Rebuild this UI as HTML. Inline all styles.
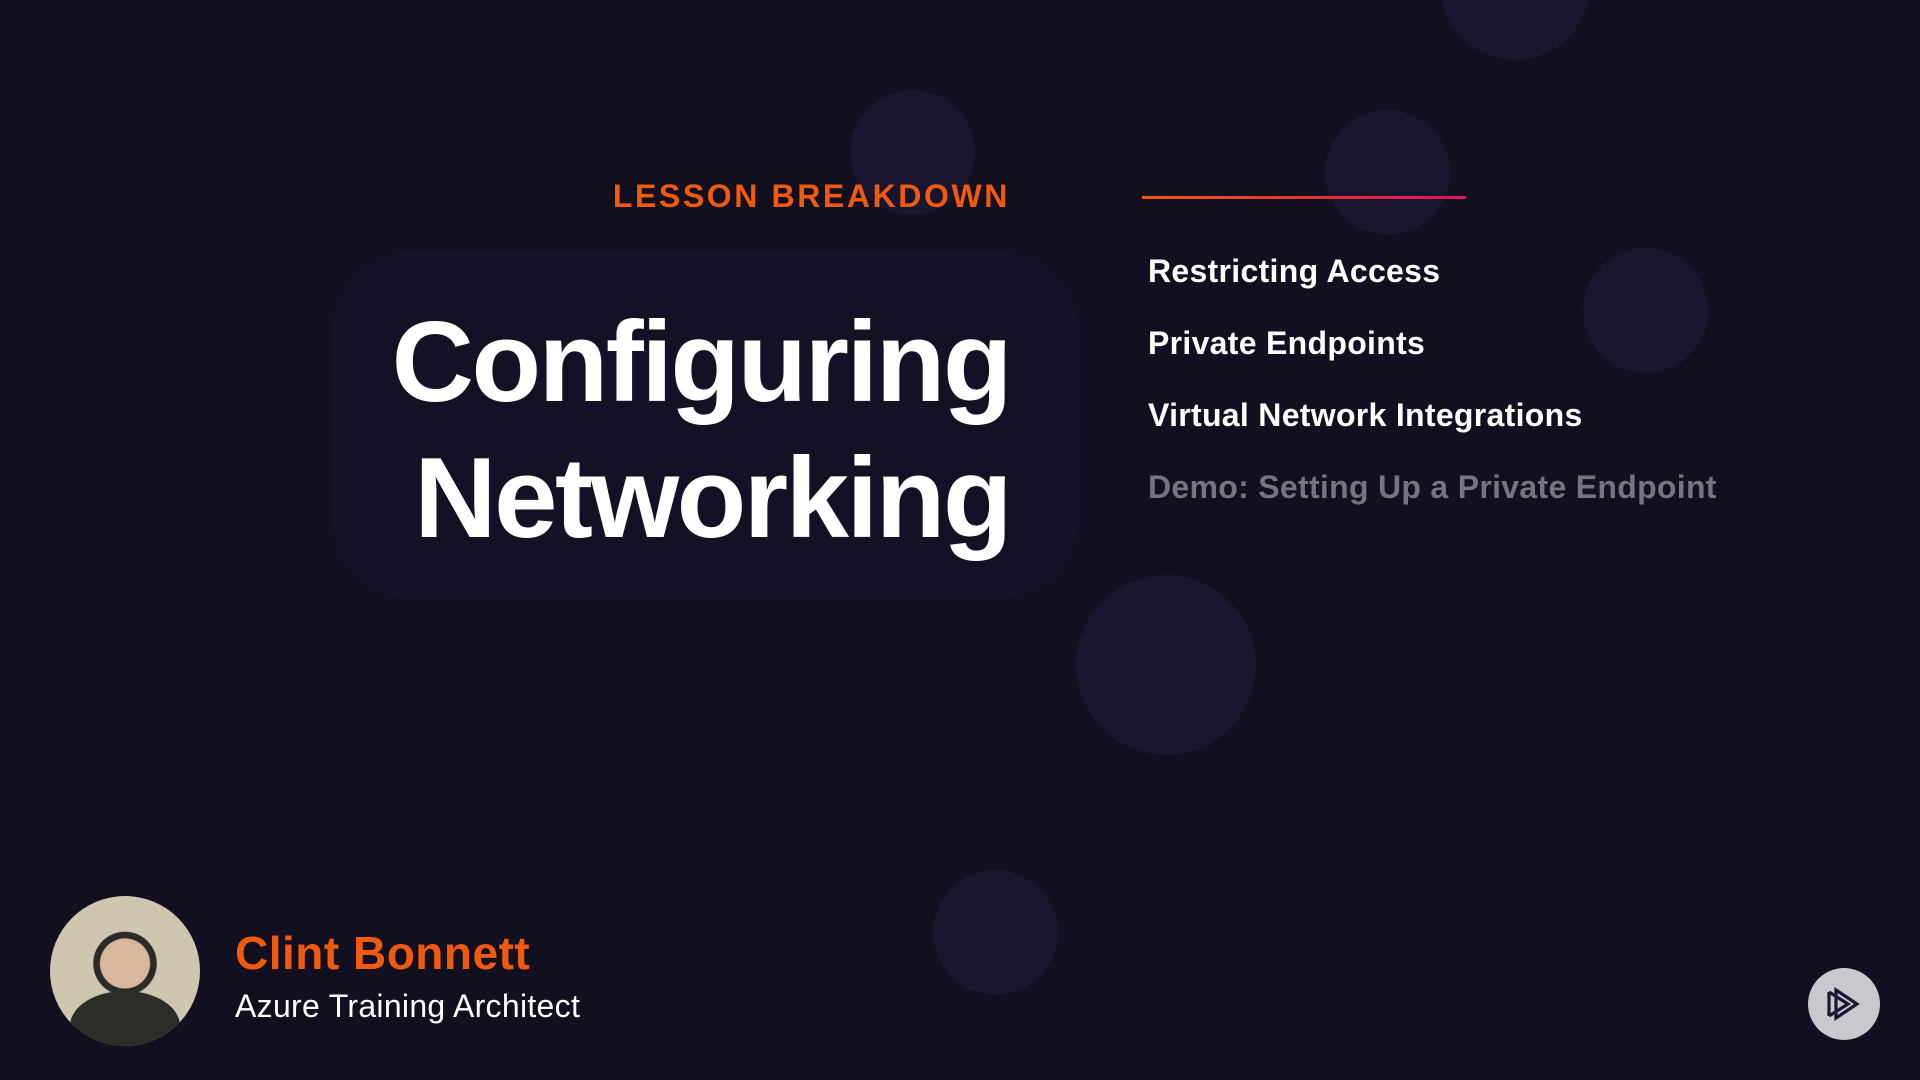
<!DOCTYPE html>
<html><head><meta charset="utf-8"><style>
html,body{margin:0;padding:0}
body{width:1920px;height:1080px;background:#110f20;position:relative;overflow:hidden;font-family:"Liberation Sans",sans-serif}
.c{position:absolute;border-radius:50%;background:#18152e}
.t{position:absolute;white-space:nowrap;font-weight:bold}
.item{position:absolute;left:1148px;color:#fff;font-size:32px;font-weight:bold;letter-spacing:0.3px;line-height:40px}
</style></head><body>
<div class="c" style="left:850px;top:90px;width:125px;height:125px"></div>
<div class="c" style="left:1325px;top:110px;width:125px;height:125px"></div>
<div class="c" style="left:1583px;top:248px;width:125px;height:125px"></div>
<div class="c" style="left:1440px;top:-30px;width:150px;height:90px;border-radius:0 0 75px 75px"></div>
<div class="c" style="left:1076px;top:575px;width:180px;height:180px"></div>
<div class="c" style="left:933px;top:870px;width:125px;height:125px"></div>
<div class="c" style="left:330px;top:250px;width:750px;height:350px;border-radius:80px;background:#131124"></div>
<div class="t" style="right:910px;top:178px;color:#f05a0e;font-size:32px;letter-spacing:2.6px">LESSON BREAKDOWN</div>
<div class="t" style="right:910px;top:295px;color:#fff;font-size:114px;letter-spacing:-2.5px;line-height:136px;text-align:right">Configuring<br>Networking</div>
<div style="position:absolute;left:1142px;top:196px;width:324px;height:3px;background:linear-gradient(90deg,#f05a0e,#e0105e)"></div>
<div class="item" style="top:251px">Restricting Access</div>
<div class="item" style="top:323px">Private Endpoints</div>
<div class="item" style="top:395px">Virtual Network Integrations</div>
<div class="item" style="top:467px;color:#77737f">Demo: Setting Up a Private Endpoint</div>
<div style="position:absolute;left:50px;top:896px;width:150px;height:150px;border-radius:50%;background:radial-gradient(circle at 50% 45%,#d9b79c 0 22%,#2a2a26 23% 28%,#cfc6b0 29%);overflow:hidden">
<div style="position:absolute;left:20px;top:95px;width:110px;height:70px;border-radius:50% 50% 0 0;background:#2b2d29"></div>
</div>
<div class="t" style="left:235px;top:926px;color:#f05a0e;font-size:46px;letter-spacing:0.5px">Clint Bonnett</div>
<div class="t" style="left:235px;top:988px;color:#fff;font-size:32px;font-weight:normal;letter-spacing:0.3px">Azure Training Architect</div>
<div style="position:absolute;left:1808px;top:968px;width:72px;height:72px;border-radius:50%;background:#c8c9cc">
<svg width="72" height="72" viewBox="0 0 72 72"><path d="M21 24v24M21 24l19 12-19 12M28 22l21 14-21 14z" fill="none" stroke="#1a1830" stroke-width="3.2" stroke-linejoin="miter"/></svg>
</div>
</body></html>
